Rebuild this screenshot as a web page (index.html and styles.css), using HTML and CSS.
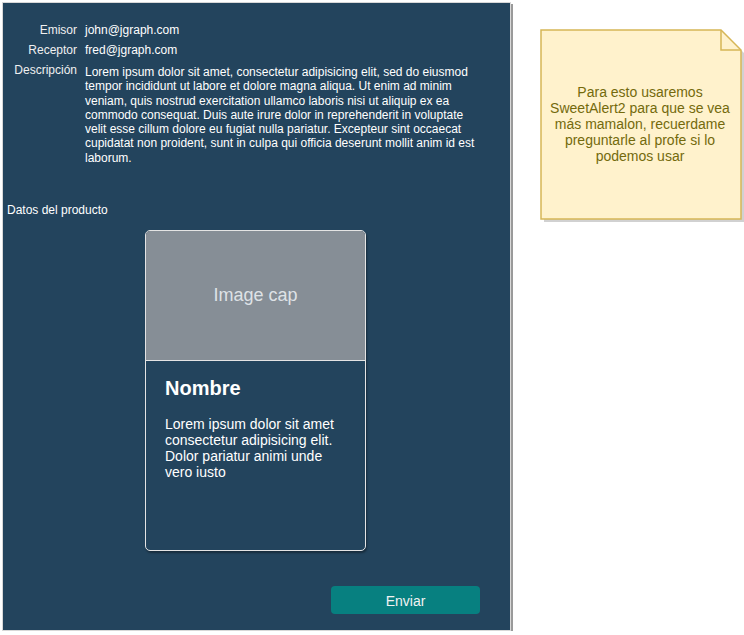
FILE: index.html
```html
<!DOCTYPE html>
<html lang="es">
<head>
<meta charset="utf-8">
<title>Mensaje</title>
<link rel="stylesheet" href="styles.css">
</head>
<body>
<div class="canvas">
  <section class="panel">
    <div class="fields">
      <div class="label">Emisor</div>
      <div class="value">john@jgraph.com</div>
      <div class="label">Receptor</div>
      <div class="value">fred@jgraph.com</div>
      <div class="label label-desc">Descripción</div>
      <div class="value value-desc">Lorem ipsum dolor sit amet, consectetur adipisicing elit, sed do eiusmod tempor incididunt ut labore et dolore magna aliqua. Ut enim ad minim veniam, quis nostrud exercitation ullamco laboris nisi ut aliquip ex ea commodo consequat. Duis aute irure dolor in reprehenderit in voluptate velit esse cillum dolore eu fugiat nulla pariatur. Excepteur sint occaecat cupidatat non proident, sunt in culpa qui officia deserunt mollit anim id est laborum.</div>
    </div>
    <div class="section-title">Datos del producto</div>
    <div class="card">
      <div class="card-img">Image cap</div>
      <div class="card-body">
        <h5 class="card-title">Nombre</h5>
        <p class="card-text">Lorem ipsum dolor sit amet consectetur adipisicing elit. Dolor pariatur animi unde vero iusto</p>
      </div>
    </div>
    <div class="actions">
      <button class="btn">Enviar</button>
    </div>
  </section>
  <aside class="note">
    <svg class="note-shape" width="206" height="193" viewBox="0 0 206 193">
      <polygon points="4,4 184,4 204,24 204,193 4,193" fill="#999" opacity="0.45"/>
      <polygon points="1,1 181,1 201,21 201,190 1,190" fill="#fff2cc" stroke="#d6b656" stroke-width="1.5"/>
      <polyline points="181,1 181,21 201,21" fill="none" stroke="#d6b656" stroke-width="1.5"/>
    </svg>
    <p class="note-text">Para esto usaremos SweetAlert2 para que se vea más mamalon, recuerdame preguntarle al profe si lo podemos usar</p>
  </aside>
</div>
</body>
</html>
```

FILE: styles.css
```css
* { box-sizing: border-box; }

html, body {
  margin: 0;
  padding: 0;
  background: #ffffff;
  font-family: "Liberation Sans", Arial, Helvetica, sans-serif;
}

.canvas {
  display: flex;
  align-items: flex-start;
  padding: 2px 0 0 2px;
}

.panel {
  width: 509px;
  height: 629px;
  background: #23445d;
  border: 1px solid #d8d8d8;
  box-shadow: 2px 2px 0 #9a9a9a;
  display: flex;
  flex-direction: column;
  padding: 17px 0 0 0;
  color: #ffffff;
}

.fields {
  display: grid;
  grid-template-columns: 74px 398px;
  column-gap: 8px;
  font-size: 12px;
}

.label {
  text-align: right;
  line-height: 20px;
  color: #f0f0f0;
}

.value {
  line-height: 20px;
  color: #ffffff;
}

.label-desc {
  line-height: 18px;
  margin-top: 1px;
}

.value-desc {
  line-height: 14.3px;
  padding-top: 2px;
  margin-top: 3px;
}

.section-title {
  font-size: 12px;
  line-height: 14px;
  margin: 38px 0 0 4px;
}

.card {
  align-self: flex-start;
  width: 221px;
  height: 321px;
  margin-top: 13px;
  margin-left: 142px;
  border: 1px solid #e4e4e4;
  border-radius: 5px;
  overflow: hidden;
  box-shadow: 1px 2px 2px rgba(0, 0, 0, 0.35);
  display: flex;
  flex-direction: column;
}

.card-img {
  height: 130px;
  background: #868e96;
  border-bottom: 1px solid #e4e4e4;
  color: #dee2e6;
  font-size: 18px;
  display: flex;
  align-items: center;
  justify-content: center;
  flex-shrink: 0;
}

.card-body {
  padding: 15px 20px 0 19px;
}

.card-title {
  margin: 0;
  font-size: 20px;
  font-weight: bold;
  line-height: 24px;
  color: #ffffff;
}

.card-text {
  margin: 16px 0 0 0;
  font-size: 14px;
  line-height: 16px;
  color: #ffffff;
}

.actions {
  display: flex;
  justify-content: flex-end;
  padding-right: 30px;
  margin-top: 35px;
}

.btn {
  width: 149px;
  height: 28px;
  border: none;
  border-radius: 4px;
  background: #078080;
  color: #f2f2f2;
  font-family: "Liberation Sans", Arial, sans-serif;
  font-size: 14px;
  padding: 1px 0 0 0;
}

.note {
  position: relative;
  width: 204px;
  height: 193px;
  margin: 27px 0 0 29px;
  display: flex;
  align-items: center;
  justify-content: center;
}

.note-shape {
  position: absolute;
  left: 0;
  top: 0;
}

.note-text {
  position: relative;
  margin: 0;
  width: 200px;
  margin-top: -4px;
  margin-right: 4px;
  padding: 0 7px;
  text-align: center;
  font-size: 14px;
  line-height: 16px;
  color: #746a0c;
}
```
